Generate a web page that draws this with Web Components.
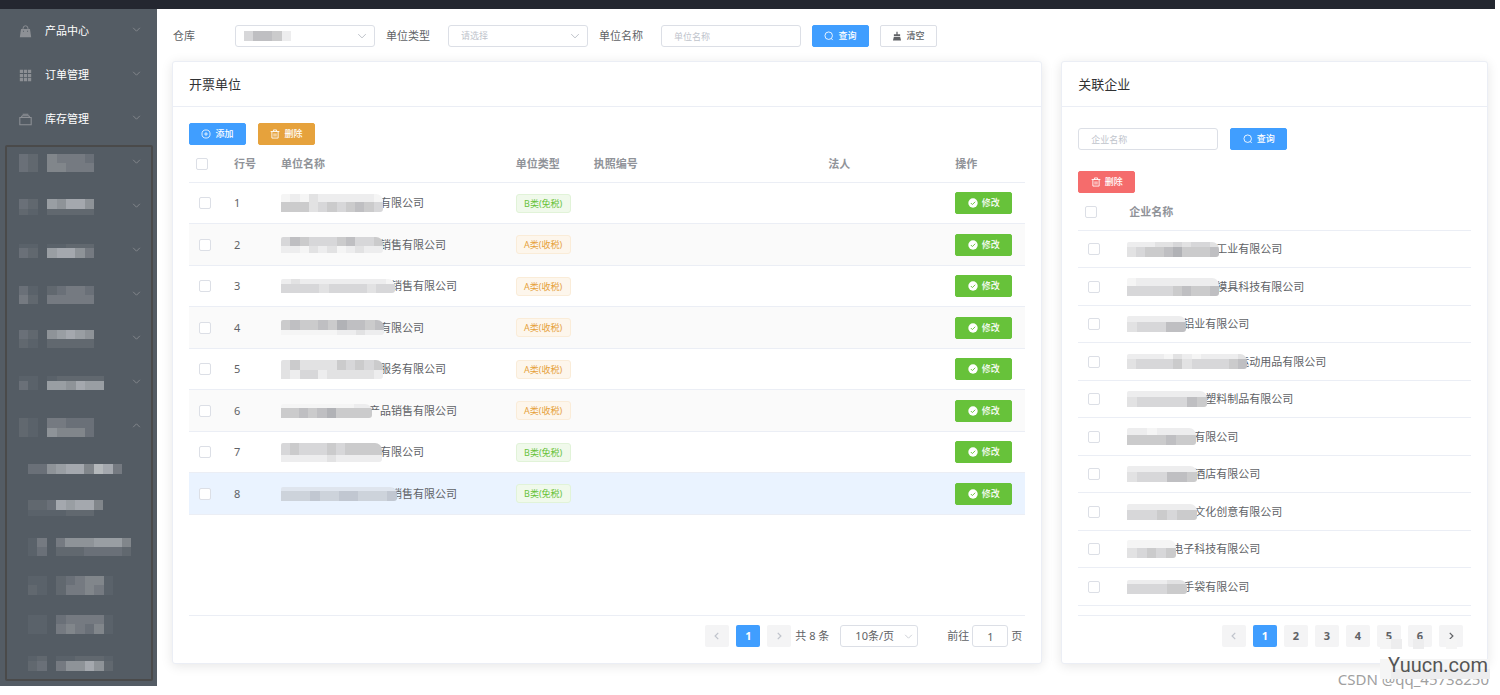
<!DOCTYPE html>
<html lang="zh-CN">
<head>
<meta charset="utf-8">
<meta name="viewport" content="width=device-width, initial-scale=1">
<title>开票单位</title>
<style>
  body {
    margin: 0;
    background: #fff;
    color: #606266;
    font-family: "Noto Sans", "Noto Sans CJK SC", sans-serif;
    font-size: 11px;
    line-height: 16px;
  }
</style>
</head>
<body>
<app-shell>
  <side-menu slot="menu"></side-menu>
  <filter-bar></filter-bar>
  <card-columns>
    <panel-card heading="开票单位"><unit-panel></unit-panel></panel-card>
    <panel-card heading="关联企业"><company-panel></company-panel></panel-card>
  </card-columns>
  <water-mark slot="mark"></water-mark>
</app-shell>

<script>
const define = (name, render) => customElements.define(name, class extends HTMLElement {
  connectedCallback() {
    if (this.shadowRoot) return;
    const template = document.createElement('template');
    template.innerHTML = render(this);
    this.attachShadow({ mode: 'open' }).append(template.content.cloneNode(true));
  }
});

/* ---------- icons ---------- */
const ICONS = {
  down: '<path d="M2 5l6 6 6-6" fill="none" stroke="currentColor" stroke-width="1.4"/>',
  up: '<path d="M2 11l6-6 6 6" fill="none" stroke="currentColor" stroke-width="1.4"/>',
  left: '<path d="M10 3L5 8l5 5" fill="none" stroke="currentColor" stroke-width="2"/>',
  right: '<path d="M6 3l5 5-5 5" fill="none" stroke="currentColor" stroke-width="2"/>',
  bag: '<path d="M5 5V4a3 3 0 0 1 6 0v1" fill="none" stroke="currentColor" stroke-width="1.2"/><path d="M2.500 5h11L15 15H1z" fill="currentColor"/><path d="M5.500 7v1.500M10.500 7v1.500" stroke="#545c64"/>',
  grid: '<path d="M1 1h4v4H1zM6 1h4v4H6zM11 1h4v4h-4zM1 6h4v4H1zM6 6h4v4H6zM11 6h4v4h-4zM1 11h4v4H1zM6 11h4v4H6zM11 11h4v4h-4z" fill="currentColor"/>',
  box: '<path d="M1 5.500h14v9H1zM2.500 5.500l1.500-2h8l1.500 2M4.500 1.500h7" fill="none" stroke="currentColor" stroke-width="1.300"/>',
  search: '<circle cx="7.500" cy="7.500" r="6" fill="none" stroke="currentColor" stroke-width="1.400"/><path d="M11.500 12l2.500 2.500" stroke="currentColor" stroke-width="1.400"/>',
  brush: '<path d="M7 1h2v4h4v3H3V5h4zM3 9h10l1.500 6h-13z" fill="currentColor"/>',
  plus: '<circle cx="8" cy="8" r="6.500" fill="none" stroke="currentColor" stroke-width="1.300"/><path d="M8 5v6M5 8h6" stroke="currentColor" stroke-width="1.300"/>',
  trash: '<path d="M1 4h14M5.500 4V1.500h5V4M3 4v10.500h10V4M6.500 7v5M9.500 7v5" fill="none" stroke="currentColor" stroke-width="1.400"/>',
  check: '<circle cx="8" cy="8" r="7.500" fill="currentColor"/><path d="M4.500 8l2.500 2.500 4.500-4.500" fill="none" stroke="#67c23a" stroke-width="1.500"/>'
};
define('ui-icon', el => `
  <style>
    :host { display: block; flex: none; width: 10px; height: 10px; }
    svg { display: block; width: 100%; height: 100%; }
  </style>
  <svg viewBox="0 0 16 16" aria-hidden="true">${ICONS[el.getAttribute('name')]}</svg>`);

/* ---------- mosaic over private text: "height:cells/height:cells" ---------- */
const TONES = {
  1: '#f5f5f5', 2: '#ededee', 3: '#e2e2e3', 4: '#d7d7d9', 5: '#cbcbcc', 6: '#bfbfc2', 7: '#b1b2b6',
  p: '#dfe5ee', q: '#cdd3db', r: '#c1c7d1',
  a: '#5a626a', b: '#61686f', c: '#6a7078', d: '#757a81', e: '#81868b', f: '#8e9398', g: '#999ea3', h: '#a4a8ae', i: '#b4b8bb'
};
define('pixel-mask', el => {
  const rows = el.getAttribute('rows').split('/').map(r => r.split(':'));
  const height = rows.reduce((sum, r) => sum + Number(r[0]), 0);
  const columns = rows[0][1].length;
  let y = 0, cells = '';
  for (const [h, tones] of rows) {
    [...tones].forEach((t, x) => {
      if (t !== '.') cells += `<rect x="${x}" y="${y}" width="1" height="${h}" fill="${TONES[t]}"/>`;
    });
    y += Number(h);
  }
  return `
  <style>
    :host { display: block; flex: none; width: ${el.getAttribute('width')}px; height: ${height}px; overflow: hidden; }
    svg { display: block; width: 100%; height: 100%; }
  </style>
  <svg viewBox="0 0 ${columns} ${height}" preserveAspectRatio="none" shape-rendering="crispEdges" aria-hidden="true">${cells}</svg>`;
});

/* ---------- button ---------- */
define('ui-button', el => `
  <style>
    :host { display: block; flex: none; }
    button {
      display: flex; align-items: center; justify-content: center; gap: 4px;
      box-sizing: border-box; width: 57px; height: 22px; padding: 0;
      border: 1px solid var(--edge, var(--fill)); border-radius: 2px;
      background: var(--fill); color: var(--ink, #fff);
      font: inherit; font-size: 9px; font-weight: 500; line-height: 12px; white-space: nowrap;
    }
    .primary { --fill: #409eff; }
    .warning { --fill: #e6a23c; }
    .danger { --fill: #f56c6c; }
    .success { --fill: #67c23a; }
    .plain { --fill: #fff; --edge: #dcdfe6; --ink: #606266; }
  </style>
  <button type="button" class="${el.getAttribute('kind')}"><ui-icon name="${el.getAttribute('icon')}"></ui-icon><slot></slot></button>`);

const CONTROL = `
  input:not([type=checkbox]), select {
    appearance: none; box-sizing: border-box; height: 22px; margin: 0;
    border: 1px solid #dcdfe6; border-radius: 3px; background: #fff;
    color: #606266; font: inherit; outline: none;
  }
  ::placeholder { color: #c0c4cc; opacity: 1; }
`;

/* ---------- labelled field ---------- */
define('form-field', el => {
  const label = el.getAttribute('label');
  const kind = el.getAttribute('kind');
  const control = kind === 'select'
    ? `<select id="f"><option>${el.getAttribute('hint') || ''}</option></select><ui-icon name="down"></ui-icon><slot></slot>`
    : `<input id="f" type="text" placeholder="${el.getAttribute('hint')}" ${kind === 'bare' ? `aria-label="${label}"` : ''}>`;
  return `
  <style>
    :host { display: flex; align-items: center; flex: none; }
    label { width: 62px; }
    .control { position: relative; width: 140px; }
    ${CONTROL}
    .control input, .control select { display: block; width: 100%; padding: 0 12px; font-size: 9px; color: #c0c4cc; }
    ui-icon { position: absolute; right: 8px; top: 6px; color: #b4b8c0; pointer-events: none; }
    ::slotted(pixel-mask) { position: absolute; left: 9px; top: 6px; }
  </style>
  ${kind === 'bare' ? '' : `<label for="f">${label}</label>`}
  <div class="control">${control}</div>`;
});

/* ---------- frame of the page ---------- */
define('app-shell', () => `
  <style>
    :host { display: flex; flex-direction: column; box-sizing: border-box; position: relative; min-height: 100vh; padding-bottom: 9px; }
    header { height: 9px; margin-right: 5px; background: #242730; }
    .page { display: flex; flex: 1; }
    main { display: flex; flex: 1; flex-direction: column; gap: 14px; min-width: 0; padding: 16px 12px 22px 15px; }
  </style>
  <header></header>
  <div class="page"><slot name="menu"></slot><main><slot></slot></main></div>
  <slot name="mark"></slot>`);

/* ---------- side menu ---------- */
const MENU = [['bag', '产品中心'], ['grid', '订单管理'], ['box', '库存管理']];
const HIDDEN_MENU = [
  '9:cb.edddc/9:cb.eeddd', '10:cb.gfhhf/6:ba.bbbbb', '4:aa.aabbb/10:cb.ghhfd',
  '9:ca.bcddc/9:db.ddddd', '9:cb.fghgf/9:ba.bbbbb', '5:aa.abbbbb/9:ca.ggfhgg', '10:ba.ddccc/9:ba.feeec'
];
const HIDDEN_SUB = [
  '10:ccfghheihd', '10:bbchghhe/6:aaaabbb.', '9:ad.dfffggge/9:ac.bbbccccb',
  '9:aa.bcdeea/10:ba.bddeda', '9:aa.cdddda/10:aa.dedcea', '5:ab.aabbba/10:bc.dffhfb'
];
define('side-menu', () => `
  <style>
    :host { display: block; position: relative; flex: none; width: 157px; background: #545c64; }
    nav { color: #fff; }
    ul { margin: 0; padding: 0; list-style: none; }
    a { display: flex; align-items: center; box-sizing: border-box; height: 44px; padding: 0 16px 0 19px; color: inherit; text-decoration: none; }
    a ui-icon { color: #8d9095; }
    a .lead { width: 13px; height: 13px; margin-right: 13px; }
    a .fold { width: 9px; height: 9px; margin-left: auto; margin-bottom: 3px; }
    ul ul a { height: 39px; padding-left: 28px; }
    .frame { position: absolute; inset: 136px 4px 5px 5px; border: 2px solid #4a4a4a; border-radius: 2px; pointer-events: none; }
  </style>
  <nav aria-label="主菜单"><ul>
    ${MENU.map(([icon, text]) => `<li><a href="#"><ui-icon class="lead" name="${icon}"></ui-icon>${text}<ui-icon class="fold" name="down"></ui-icon></a></li>`).join('')}
    ${HIDDEN_MENU.map((rows, i) => `<li><a href="#"><pixel-mask width="${rows.split('/')[0].split(':')[1].length > 8 ? 85 : 75}" rows="${rows}"></pixel-mask><ui-icon class="fold" name="${i === 6 ? 'up' : 'down'}"></ui-icon></a>${
      i === 6 ? `<ul>${HIDDEN_SUB.map(r => `<li><a href="#"><pixel-mask width="${Math.round(r.split('/')[0].split(':')[1].length * 9.4)}" rows="${r}"></pixel-mask></a></li>`).join('')}</ul>` : ''}</li>`).join('')}
  </ul></nav>
  <div class="frame"></div>`);

/* ---------- filters ---------- */
define('filter-bar', () => `
  <style>:host { display: flex; flex-wrap: wrap; align-items: center; gap: 11px; padding-left: 1px; }</style>
  <form-field label="仓库" kind="select"><pixel-mask width="47" rows="10:46652"></pixel-mask></form-field>
  <form-field label="单位类型" kind="select" hint="请选择"></form-field>
  <form-field label="单位名称" kind="text" hint="单位名称"></form-field>
  <ui-button kind="primary" icon="search">查询</ui-button>
  <ui-button kind="plain" icon="brush">清空</ui-button>`);

/* ---------- cards ---------- */
define('card-columns', () => `
  <style>:host { display: grid; grid-template-columns: minmax(0, 51fr) minmax(0, 25fr); gap: 19px; flex: 1; }</style>
  <slot></slot>`);
define('panel-card', el => `
  <style>
    :host { display: flex; flex-direction: column; border: 1px solid #ebeef5; border-radius: 3px; background: #fff; box-shadow: 0 2px 12px rgba(0, 0, 0, .1); }
    h2 { margin: 0; padding: 12px 16px; border-bottom: 1px solid #ebeef5; color: #303133; font-size: 13px; font-weight: 400; line-height: 20px; }
    .body { display: flex; flex: 1; flex-direction: column; padding: 16px; }
  </style>
  <h2>${el.getAttribute('heading')}</h2>
  <div class="body"><slot></slot></div>`);

const TABLE = `
  :host { display: flex; flex: 1; flex-direction: column; }
  .tools { display: flex; gap: 12px; }
  .holder { flex: 1; border-bottom: 1px solid #ebeef5; }
  table { width: 100%; table-layout: fixed; border-collapse: separate; border-spacing: 0; }
  th, td { box-sizing: border-box; padding: 0 8px; border-bottom: 1px solid #ebeef5; text-align: left; white-space: nowrap; }
  th { height: 38px; color: #909399; font-weight: 600; }
  th:first-child { padding-left: 7px; }
  td:first-child { padding-left: 10px; }
  input[type=checkbox] { appearance: none; display: block; box-sizing: border-box; width: 12px; height: 12px; margin: 0; border: 1px solid #dcdfe6; border-radius: 2px; background: #fff; }
  .name { display: grid; align-items: center; justify-items: start; }
  .name > * { grid-area: 1 / 1; }
  .name pixel-mask { border-radius: 2px 7px 3px 0; }
`;
const name = (text, indent, width, rows) =>
  `<div class="name"><span style="margin-left:${indent}px">${text}</span><pixel-mask width="${width}" rows="${rows}"></pixel-mask></div>`;

/* ---------- invoicing units ---------- */
const UNITS = [
  ['有限公司', 99, 102, '8:12132222221/10:55534545654', 'B'],
  ['销售有限公司', 99, 102, '9:46544456445/7:22132312322', 'A'],
  ['销售有限公司', 110, 114, '5:232222222221/9:444434444344', 'A'],
  ['有限公司', 99, 103, '10:56556576656/5:11111122322', 'A'],
  ['服务有限公司', 99, 102, '10:35333354545/9:32442333332', 'A'],
  ['产品销售有限公司', 88, 91, '4:1111111122/10:5565675555', 'A'],
  ['有限公司', 99, 101, '12:45444545555/7:22222322222', 'B'],
  ['销售有限公司', 110, 116, '4:pppppppppppp/10:qqqrqqrrqqqr', 'B']
];
define('unit-panel', () => `
  <style>
    ${TABLE}
    td { height: 42px; }
    tr:nth-child(odd) td { height: 41px; }
    tr:nth-child(even) td { background: #fafafa; }
    tr.current td { background: #eaf3ff; }
    .pick { width: 37px; } .no { width: 47px; } .type { width: 78px; } .person { width: 127px; } .act { width: 78px; }
    .tag { display: inline-block; box-sizing: border-box; width: 55px; height: 19px; border: 1px solid #e1f3d8; border-radius: 3px; background: #f0f9eb; color: #67c23a; font-size: 9px; line-height: 17px; text-align: center; vertical-align: middle; }
    .tag.A { border-color: #faecd8; background: #fdf6ec; color: #e6a23c; }
  </style>
  <div class="tools">
    <ui-button kind="primary" icon="plus">添加</ui-button>
    <ui-button kind="warning" icon="trash">删除</ui-button>
  </div>
  <div class="holder"><table>
    <colgroup><col class="pick"><col class="no"><col><col class="type"><col><col class="person"><col class="act"></colgroup>
    <thead><tr><th><input type="checkbox" aria-label="全选"></th><th>行号</th><th>单位名称</th><th>单位类型</th><th>执照编号</th><th>法人</th><th>操作</th></tr></thead>
    <tbody>${UNITS.map(([text, indent, width, rows, type], i) => `
      <tr${i === 7 ? ' class="current"' : ''}><td><input type="checkbox" aria-label="选择第${i + 1}行"></td><td>${i + 1}</td><td>${name(text, indent, width, rows)}</td><td><span class="tag ${type}">${type === 'B' ? 'B类(免税)' : 'A类(收税)'}</span></td><td></td><td></td><td><ui-button kind="success" icon="check">修改</ui-button></td></tr>`).join('')}
    </tbody>
  </table></div>
  <page-bar pages="1" full></page-bar>`);

/* ---------- linked companies ---------- */
const COMPANIES = [
  ['工业有限公司', 89, 92, '5:2223343443/10:3455675556'],
  ['模具科技有限公司', 89, 92, '8:1222222222/10:4444456556'],
  ['铝业有限公司', 56, 59, '6:222222/10:344466'],
  ['运动用品有限公司', 111, 120, '5:2222132122223/10:3444453444456'],
  ['塑料制品有限公司', 78, 80, '6:22222222/10:34444465'],
  ['有限公司', 67, 69, '7:2212222/10:5555655'],
  ['酒店有限公司', 67, 70, '6:2222222/10:3444665'],
  ['文化创意有限公司', 67, 70, '6:2222222/10:4445455'],
  ['电子科技有限公司', 45, 49, '8:11111/10:34545'],
  ['手袋有限公司', 56, 60, '4:222233/10:444455']
];
define('company-panel', () => `
  <style>
    ${TABLE}
    .search { display: flex; gap: 12px; margin: 5px 0 21px; }
    td { height: 38px; }
    tr:nth-child(odd) td { height: 37px; }
    .pick { width: 43px; }
    .name { margin-left: -2px; }
  </style>
  <div class="search">
    <form-field kind="bare" label="企业名称" hint="企业名称"></form-field>
    <ui-button kind="primary" icon="search">查询</ui-button>
  </div>
  <div class="tools"><ui-button kind="danger" icon="trash">删除</ui-button></div>
  <div class="holder"><table>
    <colgroup><col class="pick"><col></colgroup>
    <thead><tr><th><input type="checkbox" aria-label="全选"></th><th>企业名称</th></tr></thead>
    <tbody>${COMPANIES.map(([text, indent, width, rows], i) => `
      <tr><td><input type="checkbox" aria-label="选择第${i + 1}行"></td><td>${name(text, indent, width, rows)}</td></tr>`).join('')}
    </tbody>
  </table></div>
  <page-bar pages="6"></page-bar>`);

/* ---------- pagination ---------- */
define('page-bar', el => {
  const pages = Number(el.getAttribute('pages'));
  const full = el.hasAttribute('full');
  return `
  <style>
    :host { display: flex; align-items: center; justify-content: flex-end; padding: 9px ${full ? 3 : 8}px 0 0; }
    .pages { display: flex; gap: 7px; }
    button { display: flex; align-items: center; justify-content: center; width: 24px; height: 22px; padding: 0; border: 0; border-radius: 2px; background: #f4f4f5; color: #606266; font: inherit; font-weight: 700; }
    button:disabled { color: #c0c4cc; }
    button[aria-current] { background: #409eff; color: #fff; }
    .total { margin: 0 11px 0 4px; }
    .size { position: relative; width: 78px; margin-right: 29px; }
    ${CONTROL}
    select { display: block; width: 100%; padding: 0 14px; }
    .size ui-icon { position: absolute; right: 5px; top: 7px; width: 9px; height: 9px; color: #c0c4cc; pointer-events: none; }
    .jump { display: flex; align-items: center; gap: 3px; }
    .jump input { width: 36px; padding: 0; text-align: center; }
  </style>
  <div class="pages">
    <button type="button" disabled aria-label="上一页"><ui-icon name="left"></ui-icon></button>
    ${Array.from({ length: pages }, (_, i) => `<button type="button"${i ? '' : ' aria-current="page"'}>${i + 1}</button>`).join('')}
    <button type="button"${pages === 1 ? ' disabled' : ''} aria-label="下一页"><ui-icon name="right"></ui-icon></button>
  </div>
  ${full ? `<span class="total">共 8 条</span>
  <div class="size"><select aria-label="每页条数"><option>10条/页</option></select><ui-icon name="down"></ui-icon></div>
  <label class="jump">前往<input type="text" value="1">页</label>` : ''}`;
});

/* ---------- site marks over the corner ---------- */
define('water-mark', () => `
  <style>
    :host { position: absolute; right: 10px; bottom: 4px; width: 152px; height: 52px; pointer-events: none; }
    span { position: absolute; right: 0; white-space: nowrap; }
    .author { right: 1px; bottom: 2px; color: #a0a0a0; font-size: 15px; line-height: 20px; }
    pixel-mask { position: absolute; right: 0; top: 0; }
    .site { right: 2px; top: 14px; color: #555; font-family: Roboto, sans-serif; font-size: 20px; line-height: 24px; }
  </style>
  <span class="author">CSDN @qq_45738250</span>
  <pixel-mask width="110" rows="10:12.2..1.../10:........../10:1111111111/10:1222222222"></pixel-mask>
  <span class="site">Yuucn.com</span>`);
</script>
</body>
</html>
